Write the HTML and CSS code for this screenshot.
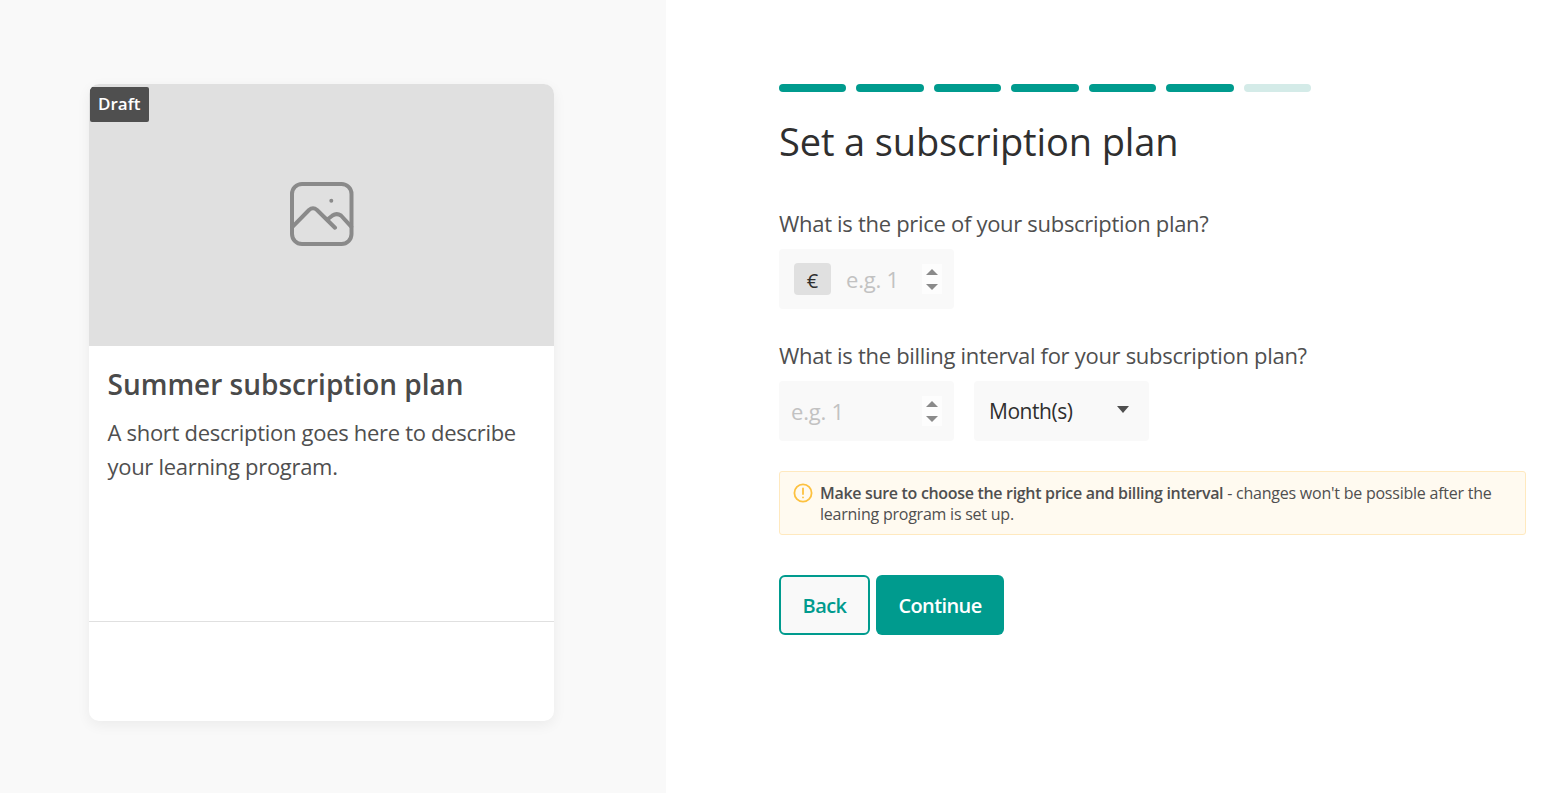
FILE: index.html
```html
<!DOCTYPE html>
<html lang="en">
<head>
<meta charset="utf-8">
<title>Set a subscription plan</title>
<link rel="stylesheet" href="styles.css">
</head>
<body>
<div class="page">
  <aside class="preview">
    <article class="card">
      <div class="card-media">
        <span class="badge">Draft</span>
        <svg class="media-icon" width="64" height="64" viewBox="0 0 64 64" fill="none" stroke="#8a8a8a" stroke-width="4" stroke-linecap="round" stroke-linejoin="round">
          <rect x="2" y="2" width="59.500" height="60" rx="10"/>
          <path d="M2.700 44.700 L19 28 Q23 24.600 27 28 L45 45.700"/>
          <path d="M38 37 L42.500 33.500 Q46.700 30.800 51 33.500 L61.200 44.700"/>
          <circle cx="41.300" cy="18.700" r="1" stroke-width="2"/>
        </svg>
      </div>
      <div class="card-body">
        <h2 class="card-title">Summer subscription plan</h2>
        <p class="card-text">A short description goes here to describe your learning program.</p>
      </div>
      <div class="card-footer"></div>
    </article>
  </aside>
  <main class="content">
    <div class="steps">
      <span class="step"></span><span class="step"></span><span class="step"></span><span class="step"></span><span class="step"></span><span class="step"></span><span class="step step-todo"></span>
    </div>
    <h1 class="title">Set a subscription plan</h1>
    <label class="question q-price">What is the price of your subscription plan?</label>
    <div class="row">
      <div class="field">
        <span class="currency">€</span>
        <span class="placeholder ph-price">e.g. 1</span>
        <span class="spinner"><i class="up"></i><i class="down"></i></span>
      </div>
    </div>
    <label class="question q-interval">What is the billing interval for your subscription plan?</label>
    <div class="row">
      <div class="field field-plain">
        <span class="placeholder">e.g. 1</span>
        <span class="spinner"><i class="up"></i><i class="down"></i></span>
      </div>
      <div class="field field-select">
        <span class="select-value">Month(s)</span>
        <i class="caret"></i>
      </div>
    </div>
    <div class="notice">
      <svg class="notice-icon" width="20" height="20" viewBox="0 0 20 20" fill="none" stroke="#fdc13f" stroke-width="1.800" stroke-linecap="round">
        <circle cx="10" cy="10" r="8.600"/>
        <path d="M10 5.500 V11"/>
        <path d="M10 14.300 V14.400"/>
      </svg>
      <p class="notice-text"><strong>Make sure to choose the right price and billing interval</strong> - changes won't be possible after the learning program is set up.</p>
    </div>
    <div class="actions">
      <button class="btn btn-back">Back</button>
      <button class="btn btn-next">Continue</button>
    </div>
  </main>
</div>
</body>
</html>
```
FILE: styles.css
```css
* { box-sizing: border-box; }
html, body { margin: 0; height: 100%; background: #fff; overflow: hidden; }
body { font-family: "Open Sans", "Noto Sans", sans-serif; color: #4a4a4a; }
.page { display: flex; height: 793px; }
.preview { width: 666px; flex: none; background: #f9f9f9; padding: 84px 0 0 89px; }
.card { width: 465px; height: 637px; background: #fff; border-radius: 10px; box-shadow: 0 4px 14px rgba(0,0,0,.06); display: flex; flex-direction: column; overflow: hidden; }
.card-media { height: 262px; flex: none; background: #e0e0e0; display: flex; align-items: center; justify-content: center; position: relative; padding-bottom: 2px; }
.media-icon { display: block; }
.badge { position: absolute; left: 1px; top: 3px; height: 35px; padding: 0 8px; background: #4f4f4f; color: #fff; border-radius: 2px; font-size: 17px; font-weight: 600; line-height: 34px; }
.card-body { flex: 1; padding: 20px 18px 0 18.500px; }
.card-title { margin: 0; font-size: 28px; line-height: 36px; font-weight: 600; color: #4a4a4a; }
.card-text { margin: 13px 0 0; font-size: 22px; line-height: 34px; color: #4f4f4f; letter-spacing: -.3px; }
.card-footer { height: 100px; flex: none; border-top: 1px solid #e0e0e0; }
.content { flex: 1; padding: 84px 15px 0 113px; }
.steps { display: flex; gap: 10px; width: 532px; }
.step { flex: 1; height: 8px; border-radius: 4px; background: #009b8e; }
.step-todo { background: #d4ebe8; }
.title { margin: 23px 0 0; font-size: 38px; line-height: 52px; font-weight: 400; color: #2f2f2f; letter-spacing: -.13px; }
.question { display: block; font-size: 22px; line-height: 30px; color: #4f4f4f; letter-spacing: -.3px; }
.q-price { margin-top: 41px; }
.q-interval { margin-top: 31px; }
.row { display: flex; gap: 20px; margin-top: 11px; }
.field { width: 175px; height: 60px; background: #f9f9f9; border-radius: 4px; display: flex; align-items: center; font-size: 22px; }
.field-plain { padding-left: 12px; }
.currency { width: 37px; height: 32px; margin-left: 15px; border-radius: 4px; background: #e0e0e0; color: #2f2f2f; text-align: center; line-height: 35px; font-size: 20px; }
.placeholder { color: #c2c2c2; letter-spacing: -.2px; }
.ph-price { margin-left: 15px; }
.spinner { margin-left: auto; margin-right: 12px; width: 20px; height: 30px; background: #fdfdfd; display: flex; flex-direction: column; align-items: center; justify-content: center; gap: 9px; }
.spinner i { width: 0; height: 0; border-left: 6px solid transparent; border-right: 6px solid transparent; }
.spinner .up { border-bottom: 6px solid #8a8a8a; }
.spinner .down { border-top: 6px solid #8a8a8a; }
.field-select { padding: 0 20px 0 15px; justify-content: space-between; }
.select-value { color: #2f2f2f; font-size: 21px; letter-spacing: -.45px; }
.caret { width: 0; height: 0; border-left: 6.500px solid transparent; border-right: 6.500px solid transparent; border-top: 7px solid #4f4f4f; margin-top: -3px; }
.notice { display: flex; gap: 7px; width: 747px; height: 64px; margin-top: 30px; padding: 11px 13px; background: #fffaf0; border: 1px solid #ffe9bf; border-radius: 3px; }
.notice-icon { flex: none; }
.notice-text { margin: 0; font-size: 16px; line-height: 21px; color: #4f4f4f; letter-spacing: -.23px; }
.notice-text strong { font-weight: 600; letter-spacing: -.32px; }
.actions { display: flex; gap: 6px; margin-top: 40px; }
.btn { height: 60px; border-radius: 6px; font-family: inherit; font-size: 20px; font-weight: 600; letter-spacing: -.6px; cursor: pointer; }
.btn-back { width: 91px; background: #f9f9f9; border: 2px solid #009b8e; color: #009b8e; }
.btn-next { width: 128px; background: #009b8e; border: 0; color: #fff; }
```
